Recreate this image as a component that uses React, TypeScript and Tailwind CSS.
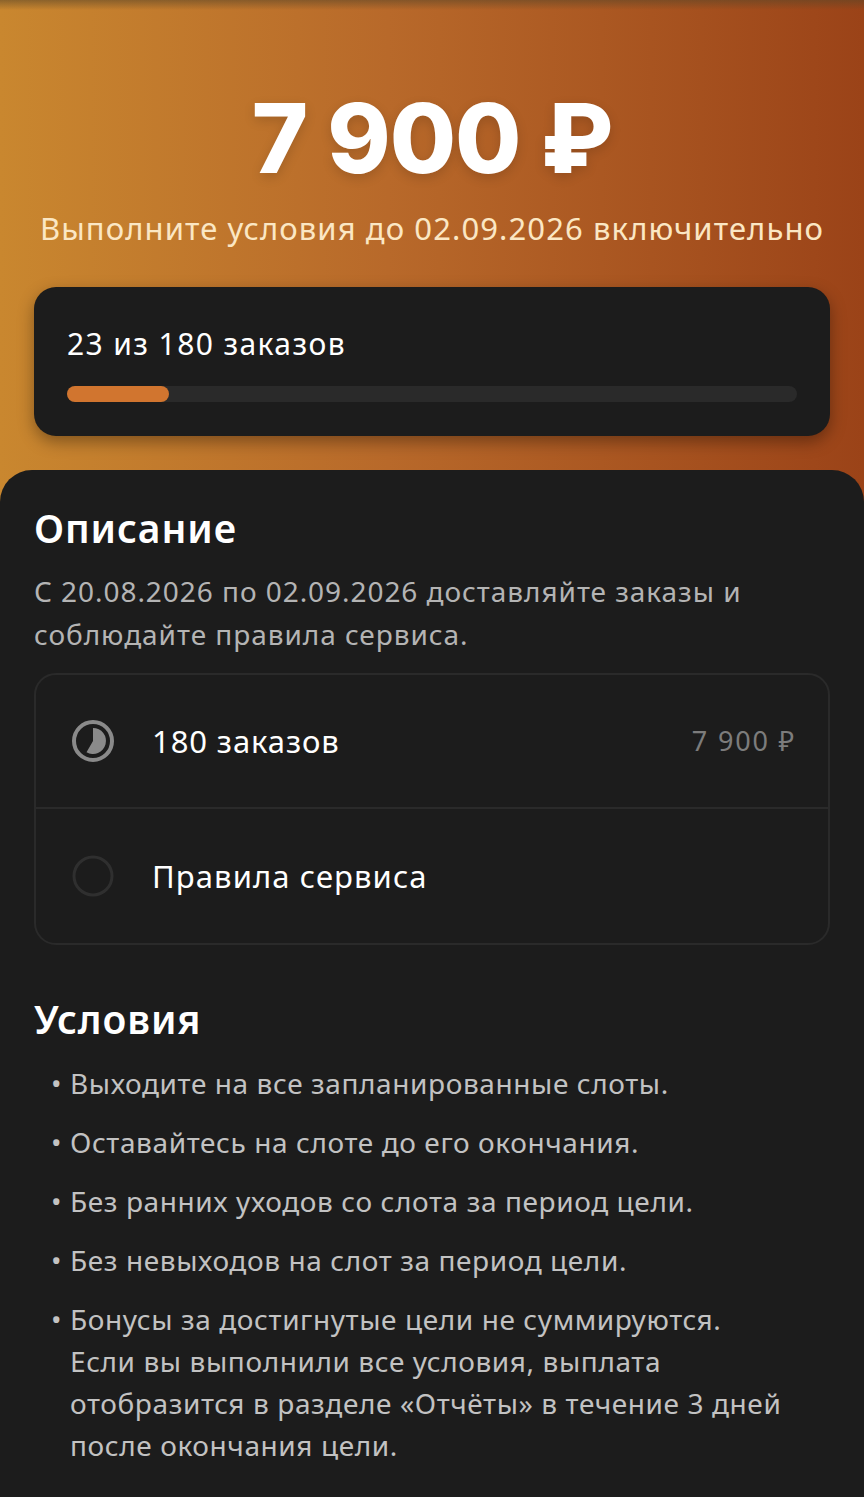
import React from "react";

const font = { fontFamily: "'Noto Sans', Roboto, sans-serif" };

function PieIcon() {
  return (
    <svg width="46" height="46" viewBox="-23 -23 46 46">
      <circle cx="0" cy="0" r="19" fill="none" stroke="#8a8a8a" strokeWidth="4" />
      <path d="M0,0 L0,-13 A13,13 0 1,1 -6.5,11.26 Z" fill="#8a8a8a" />
    </svg>
  );
}

function EmptyIcon() {
  return (
    <svg width="46" height="46" viewBox="-23 -23 46 46">
      <circle cx="0" cy="0" r="19" fill="none" stroke="#2f2f2f" strokeWidth="3" />
    </svg>
  );
}

const bullets = [
  "Выходите на все запланированные слоты.",
  "Оставайтесь на слоте до его окончания.",
  "Без ранних уходов со слота за период цели.",
  "Без невыходов на слот за период цели.",
];

export default function App() {
  return (
    <div className="min-h-screen w-full bg-[#1c1c1c]" style={font}>
      <div className="bg-[linear-gradient(90deg,#c9872f_0%,#b8692a_45%,#9b4318_100%)] pb-[34px] pt-[86px] relative">
        <div className="absolute inset-x-0 top-0 h-[10px] bg-[linear-gradient(180deg,rgba(90,70,40,0.55),rgba(90,70,40,0))]" />
        <div className="text-center text-white font-extrabold text-[96px] leading-[104px] tracking-[-1px] [text-shadow:0_4px_12px_rgba(0,0,0,0.15)]" style={{ fontFamily: "Inter, 'Noto Sans', sans-serif" }}>
          7 900 ₽
        </div>
        <div className="mt-[18px] text-center text-[#fbe7c4] text-[31px] leading-[40px] tracking-[1.1px]">
          Выполните условия до 02.09.2026 включительно
        </div>
        <div className="mx-[34px] mt-[39px] rounded-[22px] bg-[#1c1c1c] px-[33px] pt-[37px] pb-[34px] shadow-[0_6px_16px_rgba(0,0,0,0.35)]">
          <div className="text-white text-[30px] leading-[40px] tracking-[1.4px]">23 из 180 заказов</div>
          <div className="mt-[22px] h-[16px] rounded-full bg-[#2a2a2a]">
            <div className="h-full w-[102px] rounded-full bg-[#d1752f]" />
          </div>
        </div>
      </div>
      <div className="relative">
        <div className="absolute inset-x-0 top-0 h-[40px] bg-[linear-gradient(90deg,#c9872f_0%,#b8692a_45%,#9b4318_100%)]" />
        <div className="relative rounded-t-[32px] bg-[#1c1c1c] px-[34px] pt-[30px] pb-[30px]">
          <div className="text-white text-[39px] leading-[56px] font-semibold tracking-[0.9px]">Описание</div>
          <div className="mt-[14px] text-[#b4b4b4] text-[28px] leading-[43px] tracking-[0.95px]">
            С 20.08.2026 по 02.09.2026 доставляйте заказы и соблюдайте правила сервиса.
          </div>
          <div className="mt-[17px] rounded-[22px] border-2 border-[#2a2a2a]">
            <div className="flex h-[134px] items-center border-b-2 border-[#2a2a2a] pl-[34px] pr-[32px]">
              <PieIcon />
              <div className="ml-[36px] flex-1 text-white text-[31px] tracking-[0.9px]">180 заказов</div>
              <div className="text-[#7c7c7c] text-[27px] tracking-[1.8px]">7 900 ₽</div>
            </div>
            <div className="flex h-[134px] items-center pl-[34px] pr-[32px]">
              <EmptyIcon />
              <div className="ml-[36px] flex-1 text-white text-[31px] tracking-[1.1px]">Правила сервиса</div>
            </div>
          </div>
          <div className="mt-[46px] text-white text-[39px] leading-[56px] font-semibold tracking-[0.9px]">Условия</div>
          <ul className="mt-[15px] pr-[20px] text-[#c2c2c2] text-[28px] leading-[42px] tracking-[0.6px]">
            {bullets.map((b) => (
              <li key={b} className="flex mb-[17px]">
                <span className="w-[36px] shrink-0 pl-[17px]">•</span>
                <span>{b}</span>
              </li>
            ))}
            <li className="flex">
              <span className="w-[36px] shrink-0 pl-[17px]">•</span>
              <span>
                Бонусы за достигнутые цели не суммируются.
                <br />
                Если вы выполнили все условия, выплата отобразится в разделе «Отчёты» в течение 3 дней после окончания цели.
              </span>
            </li>
          </ul>
        </div>
      </div>
    </div>
  );
}
